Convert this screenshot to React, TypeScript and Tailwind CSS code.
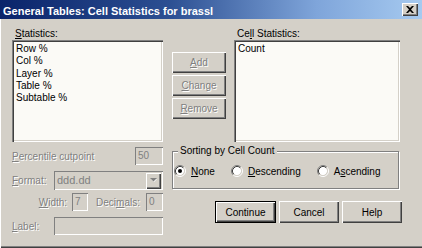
import React from "react";

const raised =
  "bg-[#d4d0c8] shadow-[inset_1px_1px_0_#ffffff,inset_-1px_-1px_0_#404040,inset_-2px_-2px_0_#808080]";
const sunken =
  "shadow-[inset_1px_1px_0_#808080,inset_2px_2px_0_#404040,inset_-1px_-1px_0_#ffffff,inset_-2px_-2px_0_#d4d0c8]";
const flatSunken = "shadow-[inset_1px_1px_0_#808080,inset_-1px_-1px_0_#ffffff]";
const dim = "text-[#808080] [text-shadow:1px_1px_0_#ffffff]";

function Key({ children }: { children: React.ReactNode }) {
  return <span className="underline underline-offset-[1px]">{children}</span>;
}

function Radio({ checked }: { checked?: boolean }) {
  return (
    <svg width="12" height="12" viewBox="0 0 12 12" className="shrink-0">
      <circle cx="6" cy="6" r="4.2" fill="#ffffff" />
      <path d="M2.11 9.89A5.5 5.5 0 0 1 9.89 2.11" fill="none" stroke="#808080" />
      <path d="M9.89 2.11A5.5 5.5 0 0 1 2.11 9.89" fill="none" stroke="#ffffff" />
      <path d="M2.82 9.18A4.5 4.5 0 0 1 9.18 2.82" fill="none" stroke="#404040" />
      <path d="M9.18 2.82A4.5 4.5 0 0 1 2.82 9.18" fill="none" stroke="#d4d0c8" />
      {checked && <circle cx="6" cy="6" r="2" fill="#000000" />}
    </svg>
  );
}

function SideButton({ label, k }: { label: string; k: string }) {
  return (
    <div className={`${raised} h-[21px] w-[54px] flex items-center justify-center ${dim}`}>
      <Key>{k}</Key>
      {label}
    </div>
  );
}

// white list with a 2px sunken edge
function ListBox({ items }: { items: string[] }) {
  return (
    <div className={`${sunken} bg-[#fbfaf6] h-[102px] pt-[3px] pl-[4px]`}>
      {items.map((item) => (
        <div key={item} className="leading-[12.25px] text-black whitespace-nowrap">
          {item}
        </div>
      ))}
    </div>
  );
}

export default function App() {
  return (
    <div
      className="w-[422px] h-[248px] bg-[#d4d0c8] flex flex-col text-[10px] text-black shadow-[inset_1px_0_0_#ffffff,inset_0_-1px_0_#404040,inset_0_-2px_0_#808080]"
      style={{ fontFamily: '"Liberation Sans", Arial, sans-serif' }}
    >
      {/* title bar */}
      <div className="h-[19px] flex items-start justify-between pr-[4px] pl-[3px] bg-[linear-gradient(to_right,#0a246a,#2c4f92_40%,#7fa5da_75%,#a6caf0)]">
        <div className="pt-[5px] leading-[13px] text-[11px] font-bold text-white whitespace-nowrap">
          General Tables: Cell Statistics for brassl
        </div>
        <div className={`${raised} mt-[3px] w-[16px] h-[13px] flex items-center justify-center`}>
          <svg width="8" height="7" viewBox="0 0 8 7">
            <path d="M0 0h2l2 2 2-2h2L5 3.5 8 7H6L4 5 2 7H0l3-3.5z" fill="#000000" />
          </svg>
        </div>
      </div>

      {/* body */}
      <div className="flex pt-[8px] pl-[12px]">
        {/* left column */}
        <div className="w-[151px] flex flex-col">
          <div className="h-[13px] leading-[13px] pl-[3px]">
            <Key>S</Key>tatistics:
          </div>
          <ListBox items={["Row %", "Col %", "Layer %", "Table %", "Subtable %"]} />

          <div className="mt-[5px] h-[18px] flex items-center justify-between">
            <span className={dim}>
              <Key>P</Key>ercentile cutpoint
            </span>
            <div className={`${flatSunken} w-[28px] h-[18px] pl-[3px] leading-[18px] text-[#808080]`}>50</div>
          </div>

          <div className="mt-[6px] h-[19px] flex items-center">
            <span className={dim}>
              <Key>F</Key>ormat:
            </span>
            <div className={`${flatSunken} ml-auto w-[109px] h-[19px] flex items-center pl-[3px] pr-[2px]`}>
              <span className="text-[#808080] text-[11px]">ddd.dd</span>
              <div className={`${raised} ml-auto w-[15px] h-[16px] flex items-center justify-center`}>
                <svg width="8" height="5" viewBox="0 0 8 5">
                  <path d="M1 1h6L4 4z" fill="#ffffff" />
                  <path d="M0 0h7L3.5 3.5z" fill="#808080" />
                </svg>
              </div>
            </div>
          </div>

          <div className="mt-[3px] h-[18px] flex items-center justify-end">
            <span className={dim}>
              <Key>W</Key>idth:
            </span>
            <div className={`${flatSunken} ml-[5px] w-[16px] h-[18px] pl-[3px] leading-[18px] text-[#808080]`}>7</div>
            <span className={`${dim} ml-[8px]`}>
              Deci<Key>m</Key>als:
            </span>
            <div className={`${flatSunken} ml-[6px] w-[17px] h-[18px] pl-[3px] leading-[18px] text-[#808080]`}>0</div>
          </div>

          <div className="mt-[6px] h-[18px] flex items-center">
            <span className={dim}>
              <Key>L</Key>abel:
            </span>
            <div className={`${flatSunken} ml-auto w-[109px] h-[18px]`} />
          </div>
        </div>

        {/* right region */}
        <div className="ml-[9px] w-[230px] flex flex-col">
          <div className="flex">
            <div className="w-[54px] pt-[25px] flex flex-col gap-[2px]">
              <SideButton k="A" label="dd" />
              <SideButton k="C" label="hange" />
              <SideButton k="R" label="emove" />
            </div>
            <div className="ml-[8px] w-[166px] flex flex-col">
              <div className="h-[13px] leading-[13px] pl-[3px]">
                Ce<Key>l</Key>l Statistics:
              </div>
              <ListBox items={["Count"]} />
            </div>
          </div>

          <div className="relative mt-[9px] mr-[3px] h-[38px] border border-[#808080] shadow-[inset_1px_1px_0_#ffffff,1px_1px_0_#ffffff]">
            <span className="absolute left-[5px] -top-[8px] px-[2px] leading-[13px] bg-[#d4d0c8]">
              Sorting by Cell Count
            </span>
            <div className="h-full flex items-center pt-[2px] pl-[1px] gap-[16px]">
              <div className="flex items-center gap-[5px]">
                <Radio checked />
                <span>
                  <Key>N</Key>one
                </span>
              </div>
              <div className="flex items-center gap-[5px]">
                <Radio />
                <span>
                  <Key>D</Key>escending
                </span>
              </div>
              <div className="flex items-center gap-[5px]">
                <Radio />
                <span>
                  A<Key>s</Key>cending
                </span>
              </div>
            </div>
          </div>

          <div className="mt-[12px] flex justify-end gap-[3px]">
            <div className="w-[61px] h-[22px] border border-black">
              <div className={`${raised} h-full flex items-center justify-center`}>Continue</div>
            </div>
            <div className={`${raised} w-[60px] h-[22px] flex items-center justify-center`}>Cancel</div>
            <div className={`${raised} w-[60px] h-[22px] flex items-center justify-center`}>Help</div>
          </div>
        </div>
      </div>
    </div>
  );
}
